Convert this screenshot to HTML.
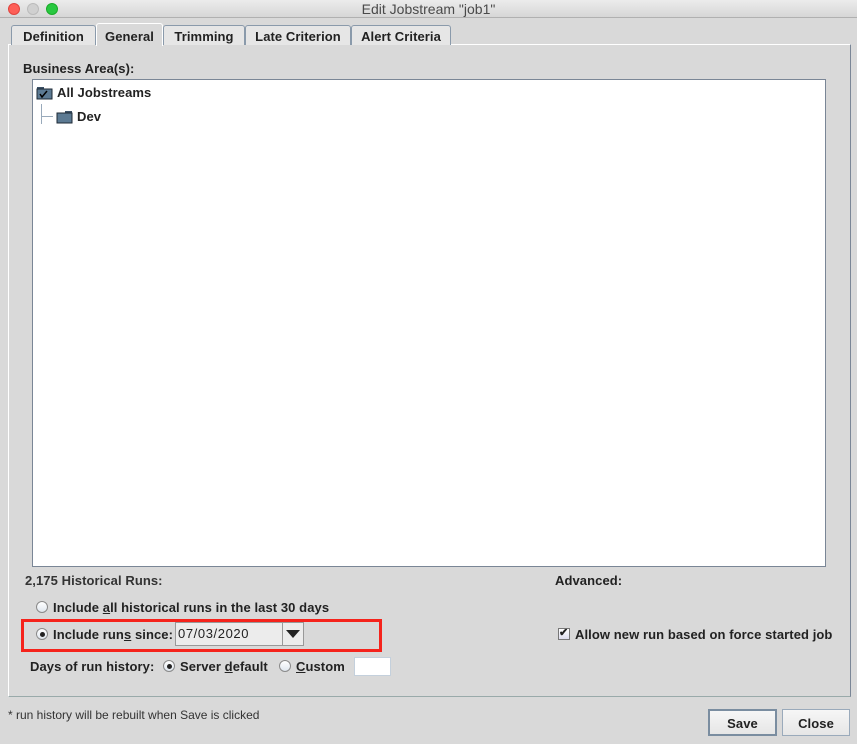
<!DOCTYPE html>
<html><head><meta charset="utf-8"><style>
*{margin:0;padding:0;box-sizing:border-box}
body{width:857px;height:744px;background:#d9d9d9;font-family:"Liberation Sans",sans-serif;position:relative;overflow:hidden;color:#222}
.a{position:absolute}
.b{font-weight:bold;font-size:13px;letter-spacing:0.08px;white-space:nowrap}
.tb{left:0;top:0;width:857px;height:18px;background:linear-gradient(#ececec,#d6d6d6);border-bottom:1px solid #b0b0b0}
.dot{top:3px;width:12px;height:12px;border-radius:50%}
.tab{top:25px;height:20px;border:1px solid #8a9aab;border-bottom:none;background:#e6e6e6;border-radius:3px 3px 0 0;padding:3px 0 0;text-align:center;font-weight:bold;font-size:13px;letter-spacing:0.08px;white-space:nowrap}
.radio{width:12px;height:12px;border-radius:50%;border:1px solid #8a8a8a;background:linear-gradient(#fff,#dfe6ee)}
.radio.on::after{content:"";position:absolute;left:2.5px;top:2.5px;width:5px;height:5px;border-radius:50%;background:#222}
u{text-decoration:underline}
</style></head><body>
<div class="a tb"></div>
<div class="a dot" style="left:8px;background:#fe5f57;border:1px solid #e0443e"></div>
<div class="a dot" style="left:27px;background:#d0d0d0;border:1px solid #bbb"></div>
<div class="a dot" style="left:46px;background:#28c840;border:1px solid #1aab29"></div>
<div class="a" style="left:0;width:857px;top:1px;text-align:center;font-size:14px;color:#4a4a4a">Edit Jobstream "job1"</div>

<div class="a" style="left:8px;top:44px;width:843px;height:653px;border-top:1px solid #fff;border-left:1px solid #fff;border-right:1px solid #7a8696;border-bottom:1px solid #9aa"></div>
<div class="a tab" style="left:11px;width:85px">Definition</div>
<div class="a tab" style="left:96px;top:23px;height:23px;width:67px;background:#d9d9d9;border-color:#fff;padding-top:5px">General</div>
<div class="a tab" style="left:163px;width:82px">Trimming</div>
<div class="a tab" style="left:245px;width:106px">Late Criterion</div>
<div class="a tab" style="left:351px;width:100px">Alert Criteria</div>

<div class="a b" style="left:23px;top:61px">Business Area(s):</div>
<div class="a" style="left:32px;top:79px;width:794px;height:488px;background:#fff;border:1px solid #7a8696"></div>
<svg class="a" style="left:36px;top:86px" width="18" height="14"><rect x="1" y="1" width="7" height="3" fill="#3c5166"/><rect x="1" y="3" width="15" height="10" fill="#5c7a93" stroke="#1e2a36"/><path d="M4 8 L6 11 L11 5" stroke="#000" stroke-width="1.5" fill="none"/></svg>
<div class="a b" style="left:57px;top:85px">All Jobstreams</div>
<div class="a" style="left:41px;top:104px;width:1px;height:20px;background:#9ab"></div>
<div class="a" style="left:41px;top:116px;width:12px;height:1px;background:#9ab"></div>
<svg class="a" style="left:56px;top:110px" width="18" height="14"><rect x="9" y="1" width="7" height="3" fill="#3c5166"/><rect x="1" y="3" width="15" height="10" fill="#5c7a93" stroke="#1e2a36"/></svg>
<div class="a b" style="left:77px;top:109px">Dev</div>

<div class="a b" style="left:25px;top:573px;color:#333">2,175 Historical Runs:</div>
<div class="a b" style="left:555px;top:573px">Advanced:</div>

<div class="a radio" style="left:36px;top:601px"></div>
<div class="a b" style="left:53px;top:600px">Include <u>a</u>ll historical runs in the last 30 days</div>

<div class="a" style="left:21px;top:619px;width:361px;height:33px;border:3px solid #f5231c"></div>
<div class="a radio on" style="left:36px;top:628px"></div>
<div class="a b" style="left:53px;top:627px">Include run<u>s</u> since:</div>
<div class="a" style="left:175px;top:622px;width:129px;height:24px;border:1px solid #999;background:#ececec"></div>
<div class="a" style="left:282px;top:623px;width:1px;height:22px;background:#999"></div>
<div class="a" style="left:178px;top:626px;font-size:13px;letter-spacing:0.6px">07/03/2020</div>
<div class="a" style="left:286px;top:630px;width:0;height:0;border-left:7px solid transparent;border-right:7px solid transparent;border-top:8px solid #222"></div>

<div class="a b" style="left:30px;top:659px">Days of run history:</div>
<div class="a radio on" style="left:163px;top:660px"></div>
<div class="a b" style="left:180px;top:659px">Server <u>d</u>efault</div>
<div class="a radio" style="left:279px;top:660px"></div>
<div class="a b" style="left:296px;top:659px"><u>C</u>ustom</div>
<div class="a" style="left:354px;top:657px;width:37px;height:19px;background:#fff;border:1px solid #c4d0dc"></div>

<div class="a" style="left:558px;top:628px;width:12px;height:12px;border:1px solid #777;background:linear-gradient(#fff,#dde)"></div>
<div class="a" style="left:559px;top:626px;font-size:11px;font-weight:bold">✔</div>
<div class="a b" style="left:575px;top:627px">Allow new run based on force started job</div>

<div class="a" style="left:8px;top:708px;font-size:12px;color:#333">* run history will be rebuilt when Save is clicked</div>
<div class="a b" style="left:708px;top:709px;width:69px;height:27px;border:2px solid #7a8da0;background:linear-gradient(#f6f6f6,#e6e6e6);text-align:center;padding-top:5px">Save</div>
<div class="a b" style="left:782px;top:709px;width:68px;height:27px;border:1px solid #9aaabb;background:linear-gradient(#f6f6f6,#e6e6e6);text-align:center;padding-top:6px">Close</div>
</body></html>
